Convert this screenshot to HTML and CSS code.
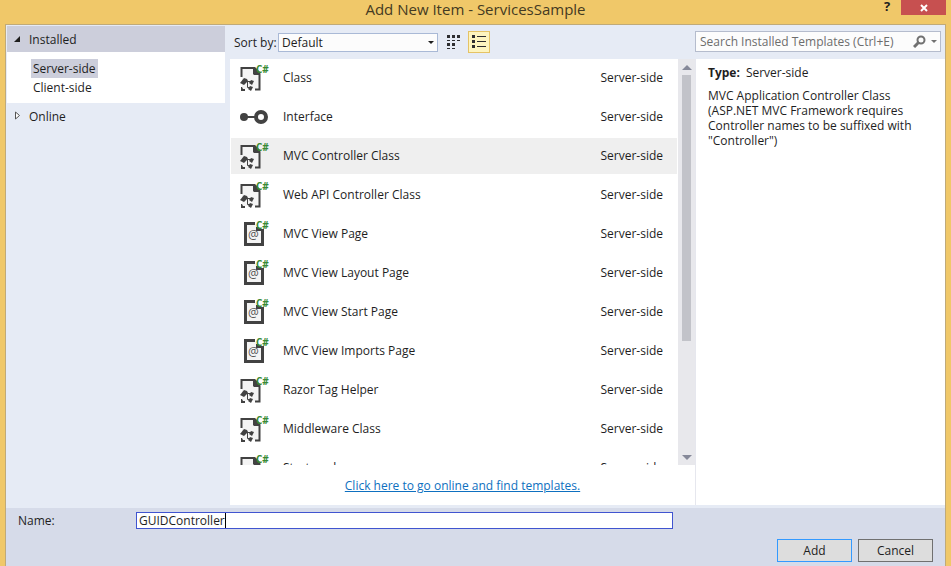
FILE: index.html
```html
<!DOCTYPE html>
<html lang="en">
<head>
    <meta charset="UTF-8">
    <meta name="viewport" content="width=device-width, initial-scale=1.0">
    <title>Add New Item - ServicesSample</title>
    <link rel="stylesheet" href="styles.css">
</head>
<body>
    <!-- shared template icons -->
    <svg class="symbols" aria-hidden="true">
        <symbol id="icon-class" viewBox="0 0 32 30">
            <path d="M3 5h11l6 6v15H3z" fill="#f4f4f4"/>
            <path d="M2.500 14V5H15L20.500 11V26.500H16" fill="none" stroke="#424242" stroke-width="2"/>
            <path d="M14 4h2l5 5v3h-6l-1-1z" fill="#424242"/>
            <path d="M2 24h1l1 2h2v2H2z" fill="#424242"/>
            <path d="M5 15l3 1 1 2-4 4-4-2z" fill="#424242"/>
            <path d="M7 18.500h6M8.500 18v6.500H12" fill="none" stroke="#424242"/>
            <path d="M12 17l3 1-2 4-3-2zM11 23l3 1-2 4-3-2z" fill="#424242"/>
        </symbol>
        <symbol id="icon-page" viewBox="0 0 32 30">
            <path d="M16 4.500H6.500V25.500H23.500V9" fill="#f4f4f4" stroke="#424242" stroke-width="3"/>
            <path d="M17 0h13v10H17z" fill="#fff"/>
            <path d="M17 8h2l2 2h4v2h-8z" fill="#424242"/>
        </symbol>
        <symbol id="icon-interface" viewBox="0 0 32 30">
            <circle cx="5" cy="15" r="4" fill="#424242"/>
            <path d="M8 15h9" stroke="#424242" stroke-width="2"/>
            <circle cx="22" cy="15" r="5" fill="#fff" stroke="#424242" stroke-width="4"/>
        </symbol>
    </svg>

    <div class="window">
        <header class="titlebar">
            <h1>Add New Item - ServicesSample</h1>
            <div class="window-buttons">
                <button class="help" aria-label="Help">?</button>
                <button class="close" aria-label="Close">
                    <svg width="8" height="8" viewBox="0 0 8 8"><path d="M1 1l6 6M7 1l-6 6" stroke="#fff" stroke-width="2"/></svg>
                </button>
            </div>
        </header>

        <form class="dialog">
            <div class="content">
                <nav class="sidebar">
                    <button type="button" class="group open">
                        <svg width="8" height="8" viewBox="0 0 8 8"><path d="M7 1v6H1z" fill="#1e1e1e"/></svg>
                        Installed
                    </button>
                    <ul class="tree">
                        <li><a href="#" class="active">Server-side</a></li>
                        <li><a href="#">Client-side</a></li>
                    </ul>
                    <button type="button" class="group">
                        <svg width="8" height="10" viewBox="0 0 8 10"><path d="M2.500 1v7l4-3.500z" fill="#fff" stroke="#555"/></svg>
                        Online
                    </button>
                </nav>

                <section class="templates">
                    <div class="toolbar">
                        <label for="sort">Sort by:</label>
                        <div class="select">
                            <select id="sort">
                                <option>Default</option>
                            </select>
                            <svg width="6" height="3" viewBox="0 0 6 3"><path d="M0 0h6L3 3z" fill="#1e1e1e"/></svg>
                        </div>
                        <button type="button" class="view" aria-label="Small icons">
                            <svg width="14" height="14" viewBox="0 0 14 14" fill="#2d2d30"><path d="M0 0h3v3H0zM5 0h3v3H5zM10 0h3v3h-3zM0 8h3v3H0zM5 8h3v3H5zM0 5h3v1H0zM5 5h3v1H5zM10 5h3v1h-3zM0 13h3v1H0zM5 13h3v1H5z"/></svg>
                        </button>
                        <button type="button" class="view selected" aria-label="Medium icons">
                            <svg width="14" height="14" viewBox="0 0 14 14" fill="#2d2d30"><path d="M0 0h3v3H0zM0 5h3v3H0zM0 10h3v3H0zM5 1h9v1H5zM5 6h9v1H5zM5 11h9v1H5z"/></svg>
                        </button>
                    </div>

                    <div class="list">
                        <ul class="items">
                            <li><div class="icon"><svg><use href="#icon-class"/></svg><i>C#</i></div><span>Class</span><span class="side">Server-side</span></li>
                            <li><div class="icon"><svg><use href="#icon-interface"/></svg></div><span>Interface</span><span class="side">Server-side</span></li>
                            <li class="selected"><div class="icon"><svg><use href="#icon-class"/></svg><i>C#</i></div><span>MVC Controller Class</span><span class="side">Server-side</span></li>
                            <li><div class="icon"><svg><use href="#icon-class"/></svg><i>C#</i></div><span>Web API Controller Class</span><span class="side">Server-side</span></li>
                            <li><div class="icon"><svg><use href="#icon-page"/></svg><i>C#</i><b>@</b></div><span>MVC View Page</span><span class="side">Server-side</span></li>
                            <li><div class="icon"><svg><use href="#icon-page"/></svg><i>C#</i><b>@</b></div><span>MVC View Layout Page</span><span class="side">Server-side</span></li>
                            <li><div class="icon"><svg><use href="#icon-page"/></svg><i>C#</i><b>@</b></div><span>MVC View Start Page</span><span class="side">Server-side</span></li>
                            <li><div class="icon"><svg><use href="#icon-page"/></svg><i>C#</i><b>@</b></div><span>MVC View Imports Page</span><span class="side">Server-side</span></li>
                            <li><div class="icon"><svg><use href="#icon-class"/></svg><i>C#</i></div><span>Razor Tag Helper</span><span class="side">Server-side</span></li>
                            <li><div class="icon"><svg><use href="#icon-class"/></svg><i>C#</i></div><span>Middleware Class</span><span class="side">Server-side</span></li>
                            <li><div class="icon"><svg><use href="#icon-class"/></svg><i>C#</i></div><span>Startup class</span><span class="side">Server-side</span></li>
                        </ul>
                        <div class="scrollbar">
                            <svg width="10" height="5" viewBox="0 0 10 5"><path d="M0 5h10L5 0z" fill="#868999"/></svg>
                            <div class="track"><div class="thumb"></div></div>
                            <svg width="10" height="5" viewBox="0 0 10 5"><path d="M0 0h10L5 5z" fill="#868999"/></svg>
                        </div>
                    </div>
                    <p class="online"><a href="#">Click here to go online and find templates.</a></p>
                </section>

                <aside class="details">
                    <div class="search">
                        <input type="text" placeholder="Search Installed Templates (Ctrl+E)" aria-label="Search Installed Templates">
                        <svg width="13" height="13" viewBox="0 0 13 13"><circle cx="8" cy="5" r="3.500" fill="none" stroke="#717171" stroke-width="2"/><path d="M6 7l-5 5" stroke="#717171" stroke-width="3"/></svg>
                        <svg width="6" height="3" viewBox="0 0 6 3"><path d="M0 0h6L3 3z" fill="#717171"/></svg>
                    </div>
                    <div class="description">
                        <p><b>Type:</b>Server-side</p>
                        <p>MVC Application Controller Class (ASP.NET MVC Framework requires Controller names to be suffixed with "Controller")</p>
                    </div>
                </aside>
            </div>

            <footer class="footer">
                <div class="name-row">
                    <label for="name">Name:</label>
                    <div class="name-box"><input type="text" id="name" value="GUIDController"></div>
                </div>
                <div class="actions">
                    <button type="submit" class="add">Add</button>
                    <button type="button">Cancel</button>
                </div>
            </footer>
        </form>
    </div>
</body>
</html>
```

FILE: styles.css
```css
* {
    margin: 0;
    padding: 0;
    box-sizing: border-box;
}
body {
    background: #f0c869;
    color: #1e1e1e;
    font-family: "Open Sans", "Noto Sans", sans-serif;
    font-size: 12px;
    line-height: 15px;
}
button, input, select {
    font: inherit;
    color: inherit;
    border: none;
    background: none;
    outline: none;
}
ul {
    list-style: none;
}
svg {
    flex: none;
}
.symbols {
    position: absolute;
    width: 0;
    height: 0;
}
.window {
    display: flex;
    flex-direction: column;
    height: 100vh;
    padding: 0 5px;
}

/* title bar */
.titlebar {
    position: relative;
    height: 24px;
    flex: none;
}
.titlebar h1 {
    font-size: 15px;
    font-weight: normal;
    line-height: 19px;
    text-align: center;
    color: #443a22;
}
.window-buttons {
    position: absolute;
    top: 0;
    right: 0;
    display: flex;
    gap: 8px;
}
.help {
    width: 12px;
    height: 12px;
    font-size: 13px;
    font-weight: bold;
    line-height: 12px;
}
.close {
    width: 45px;
    height: 15px;
    background: #c75050;
    line-height: 10px;
}

.dialog {
    flex: 1;
    min-height: 0;
    display: flex;
    flex-direction: column;
    border: 1px solid #c0aa78;
    border-bottom: none;
    background: #e6ebf5;
}
.content {
    flex: 1;
    min-height: 0;
    display: flex;
    padding: 0 0 3px 1px;
}

/* left tree */
.sidebar {
    flex: 0 0 218px;
    margin-right: 5px;
    padding-top: 1px;
}
.group {
    display: flex;
    align-items: center;
    gap: 8px;
    width: 100%;
    height: 26px;
    padding-left: 6px;
}
.group.open {
    background: #cccedb;
}
.tree {
    padding: 7px 0 6px 24px;
    background: #fff;
}
.tree a {
    display: inline-block;
    padding: 2px;
    color: inherit;
    text-decoration: none;
}
.tree li {
    height: 19px;
}
.tree .active {
    background: #cccedb;
}

/* template list */
.templates {
    flex: 1;
    min-width: 0;
    display: flex;
    flex-direction: column;
}
.toolbar {
    display: flex;
    align-items: center;
    height: 34px;
    padding-left: 4px;
}
.toolbar label {
    width: 44px;
    white-space: nowrap;
}
.select {
    display: flex;
    align-items: center;
    width: 160px;
    height: 19px;
    margin-right: 5px;
    padding-right: 3px;
    border: 1px solid #a9b9d6;
    background: #fcfcfc;
}
.select select {
    flex: 1;
    padding-left: 3px;
    appearance: none;
}
.view {
    display: flex;
    align-items: center;
    justify-content: center;
    width: 22px;
    height: 22px;
    margin-right: 3px;
}
.view.selected {
    border: 1px solid #e5c365;
    background: #fdf4bf;
}
.list {
    flex: 1;
    min-height: 0;
    display: flex;
    background: #fff;
}
.items {
    flex: 1;
    display: flex;
    flex-direction: column;
    gap: 3px;
    padding: 1px 1px 0;
    overflow: hidden;
}
.items li {
    flex: none;
    display: flex;
    align-items: center;
    height: 36px;
    padding: 0 14px 1px 8px;
}
.items li.selected {
    background: #efefef;
}
.icon {
    position: relative;
    height: 30px;
    margin-right: 12px;
}
.icon svg {
    display: block;
    width: 32px;
    height: 30px;
}
.icon i {
    position: absolute;
    top: 1px;
    left: 17px;
    font: bold 10px/10px "Open Sans", sans-serif;
    color: #388a34;
}
.icon b {
    position: absolute;
    top: 9px;
    left: 9px;
    font: 12px/13px "Open Sans", sans-serif;
    color: #555;
}
.side {
    margin-left: auto;
}
.scrollbar {
    display: flex;
    flex-direction: column;
    align-items: center;
    gap: 5px;
    width: 17px;
    padding: 6px 0 5px;
    background: #e8e8ec;
}
.track {
    flex: 1;
    width: 9px;
}
.thumb {
    height: 71%;
    background: #c2c3c9;
}
.online {
    height: 40px;
    padding-top: 13px;
    background: #fff;
    text-align: center;
}
.online a {
    color: #0e70c0;
}

/* right pane */
.details {
    flex: 0 0 250px;
    display: flex;
    flex-direction: column;
}
.search {
    display: flex;
    align-items: center;
    gap: 5px;
    height: 21px;
    margin: 6px 4px 7px 0;
    padding: 0 3px 0 4px;
    border: 1px solid #b5bccd;
    background: #fcfcfc;
}
.search input {
    flex: 1;
    min-width: 0;
}
.search input::placeholder {
    color: #6d6d6d;
}
.description {
    flex: 1;
    padding: 6px 32px 0 12px;
    border-left: 1px solid #e6e7ee;
    background: #fff;
}
.description p {
    margin-bottom: 8px;
}
.description b {
    margin-right: 6px;
}

/* bottom */
.footer {
    padding: 4px 12px 4px 12px;
    background: #d6dbe9;
}
.name-row {
    display: flex;
    align-items: center;
}
.name-row label {
    width: 118px;
}
.name-box {
    display: flex;
    width: 537px;
    height: 17px;
    padding-left: 2px;
    border: 1px solid #4054d0;
    background: #fff;
}
.name-box input {
    field-sizing: content;
    border-right: 1px solid #000;
}
.actions {
    display: flex;
    justify-content: flex-end;
    gap: 6px;
    margin-top: 10px;
}
.actions button {
    width: 75px;
    height: 23px;
    border: 1px solid #707070;
    background: #dddddd;
}
.actions button.add {
    border-color: #3399ff;
}
```
